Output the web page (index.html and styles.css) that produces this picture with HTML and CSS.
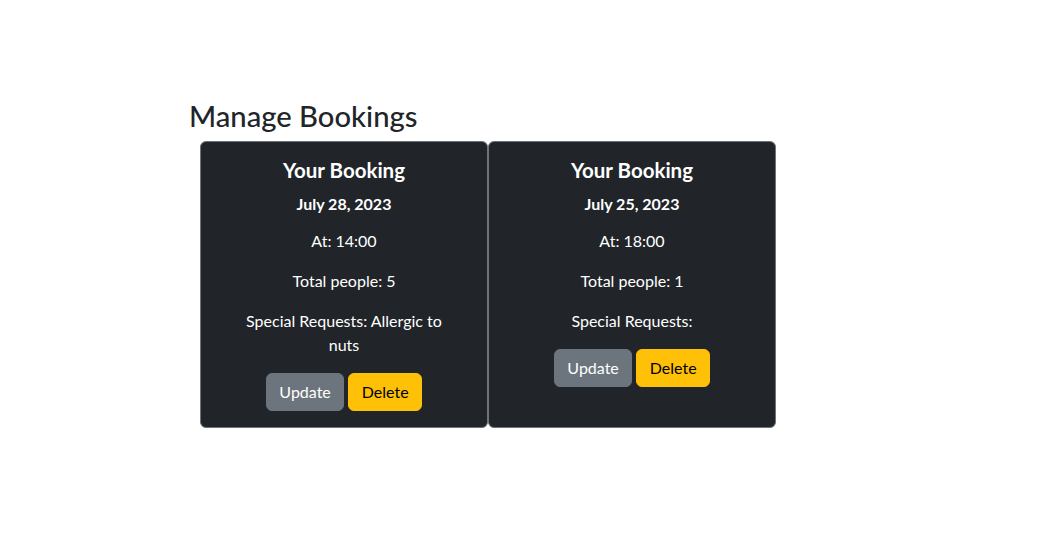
FILE: index.html
```html
<!DOCTYPE html>
<html lang="en">
<head>
<meta charset="utf-8">
<title>Manage Bookings</title>
<link rel="stylesheet" href="styles.css">
</head>
<body>
<main class="page">
  <h2 class="page-title">Manage Bookings</h2>
  <div class="cards">
    <div class="card">
      <h5 class="card-title">Your Booking</h5>
      <p class="card-date">July 28, 2023</p>
      <p class="card-line">At: 14:00</p>
      <p class="card-line">Total people: 5</p>
      <p class="card-line">Special Requests: Allergic to nuts</p>
      <div class="actions">
        <button class="btn btn-secondary">Update</button>
        <button class="btn btn-warning">Delete</button>
      </div>
    </div>
    <div class="card">
      <h5 class="card-title">Your Booking</h5>
      <p class="card-date">July 25, 2023</p>
      <p class="card-line">At: 18:00</p>
      <p class="card-line">Total people: 1</p>
      <p class="card-line">Special Requests: </p>
      <div class="actions">
        <button class="btn btn-secondary">Update</button>
        <button class="btn btn-warning">Delete</button>
      </div>
    </div>
  </div>
</main>
</body>
</html>
```
FILE: styles.css
```css
* { box-sizing: border-box; }
body {
  margin: 0;
  font-family: "Lato", "Liberation Sans", sans-serif;
  font-size: 16px;
  line-height: 1.5;
  color: #212529;
  background: #fff;
}
.page {
  padding: 98px 0 0 189px;
}
.page-title {
  margin: 0 0 8px;
  font-size: 29.2px;
  font-weight: 500;
  line-height: 1.2;
}
.cards {
  display: flex;
  padding-left: 11px;
}
.card {
  width: 288px;
  background: #212529;
  color: #fff;
  border: 1px solid #6c757d;
  border-radius: 6px;
  padding: 16px;
  text-align: center;
}
.card-title {
  margin: 0 0 10px;
  font-size: 20.5px;
  font-weight: 700;
  line-height: 24px;
}
.card-date {
  margin: 0 0 13px;
  font-weight: 700;
  line-height: 24px;
}
.card-line {
  margin: 0 0 16px;
  padding: 0 16px;
}
.actions {
  display: flex;
  justify-content: center;
  gap: 4px;
}
.btn {
  font: inherit;
  line-height: 24px;
  padding: 6px 12.5px;
  border: 1px solid transparent;
  border-radius: 6px;
}
.btn-secondary { background: #6c757d; border-color: #6c757d; color: #fff; }
.btn-warning { background: #ffc107; border-color: #ffc107; color: #000; }
```
